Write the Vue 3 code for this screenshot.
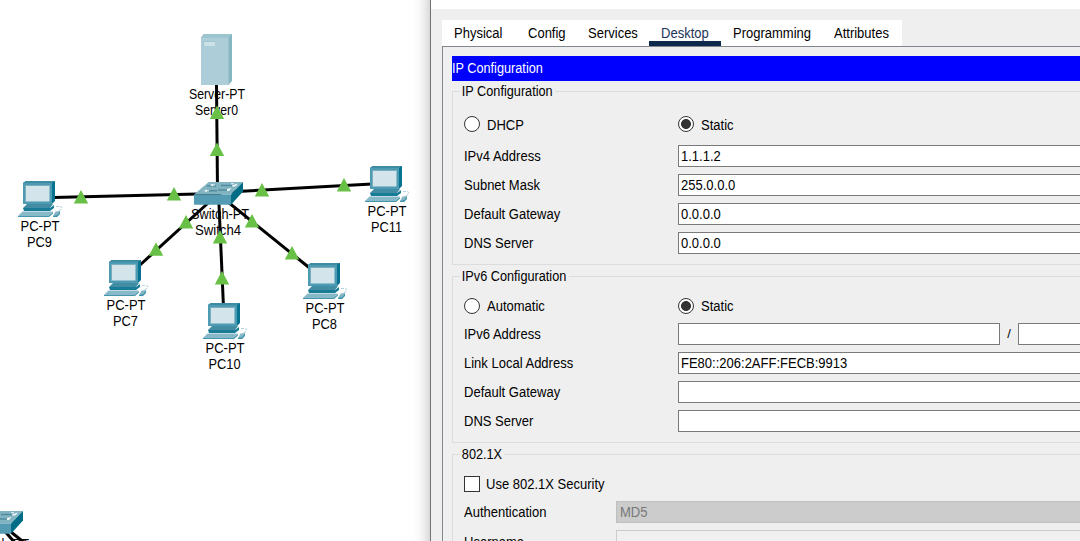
<script setup>
const tabs = [
  { name: 'Physical', width: 74 },
  { name: 'Config', width: 60 },
  { name: 'Services', width: 73 },
  { name: 'Desktop', width: 72, active: true },
  { name: 'Programming', width: 101 },
  { name: 'Attributes', width: 80 },
]
const ipv4 = [
  ['IPv4 Address', '1.1.1.2'],
  ['Subnet Mask', '255.0.0.0'],
  ['Default Gateway', '0.0.0.0'],
  ['DNS Server', '0.0.0.0'],
]
const ipv6 = [
  ['Link Local Address', 'FE80::206:2AFF:FECB:9913'],
  ['Default Gateway', ''],
  ['DNS Server', ''],
]
const pcs = [
  { name: 'PC9', x: 18, y: 181, w: 25 },
  { name: 'PC11', x: 365, y: 166, w: 31 },
  { name: 'PC7', x: 104, y: 260, w: 25 },
  { name: 'PC10', x: 203, y: 303, w: 32 },
  { name: 'PC8', x: 303, y: 263, w: 25 },
]
const links = [
  [216.5, 85, 217.5, 190],
  [53, 197.5, 218, 193.5],
  [372, 184, 218, 192.5],
  [140, 265, 218, 194],
  [309, 267.5, 218, 194],
  [223.3, 303, 218.5, 193],
]
const ports = [
  [217, 105.5], [217, 142.5], [262, 183], [174, 187], [81, 190], [344, 178],
  [186, 215], [252, 214], [220, 230], [156, 242.3], [222, 271], [292, 246],
]
const switches = [[194, 182], [-26, 511]]
</script>

<template>
  <main class="screen">
    <svg class="topology" width="430" height="541" viewBox="0 0 430 541">
      <defs>
        <g id="pc">
          <path d="M5 2L8 0H37V20L34 23Z" fill="#087391" />
          <path d="M5 2L8 0H37L34 2Z" fill="#3e8ca4" />
          <path d="M5 2H34V23H5Z" fill="#4d9ab3" />
          <path d="M7 4H31.5V20.5H7Z" fill="#d3e4ea" />
          <path d="M7 4H31.5V5H8V20.5H7Z" fill="#7aaebd" />
          <path d="M9 23H35L32 27H5Z" fill="#428da4" />
          <path d="M5 27H32L36 24V27L32 30H6Z" fill="#187c96" />
          <path d="M4.5 30.5H35L30 35H0Z" fill="#88b9c8" />
          <path d="M0 35H30L35 31V32.5L31 36H0Z" fill="#4595ac" />
          <path d="M37.5 30.5L42 30L39.5 35H35Z" fill="#87b7c5" />
          <path d="M35 35L39.5 34L42 30V33L39 36H35Z" fill="#3d93ab" />
          <path d="M38 25.5H42L44 26.5L42.5 29L40 30" fill="none" stroke="#b5d2dc" stroke-width="1" stroke-dasharray="3 1" />
        </g>
        <g id="switch">
          <path d="M0 12.5L14.7 0H49L37 12.5Z" fill="#82b3c1" />
          <path d="M0 12.5H37V22.7H0Z" fill="#529bb3" />
          <path d="M37 12.5L49 0V9.5L37 22.7Z" fill="#006c85" />
          <g fill="none" stroke="#508d9e" stroke-width="1.4">
            <path d="M13 4H22M27 3.5H38M12 8.7H23M24 8H35" />
          </g>
          <g fill="#eef6f8">
            <path d="M16 3L19 1.7V4.5ZM38 3.5L44 1.5L42 4L39 5ZM9.5 9L13 7.5V10ZM33 7L37.5 6L35 9H33Z" />
            <path d="M19 2.5h2v1h-2zM37 1.3h3v1h-3zM13 8.3h2v1h-2z" />
          </g>
        </g>
      </defs>

      <g class="caption">
        <text x="217" y="99" textLength="56" lengthAdjust="spacingAndGlyphs">Server-PT</text>
        <text x="216.5" y="115" textLength="43" lengthAdjust="spacingAndGlyphs">Server0</text>
        <text x="220" y="219" textLength="58" lengthAdjust="spacingAndGlyphs">Switch-PT</text>
        <text x="218" y="235" textLength="46" lengthAdjust="spacingAndGlyphs">Switch4</text>
        <text x="0" y="548.5" textLength="58" lengthAdjust="spacingAndGlyphs">Switch-PT</text>
      </g>

      <g stroke="#000" stroke-width="3">
        <line v-for="(l, i) in links" :key="i" :x1="l[0]" :y1="l[1]" :x2="l[2]" :y2="l[3]" />
        <line x1="2" y1="528" x2="16" y2="544" />
        <line x1="6" y1="528" x2="26" y2="544" />
      </g>

      <path d="M201 37.5L204 34H232V81L228.5 85H201Z" fill="#86b8c4" />
      <path d="M201 37.5L204 34H232L228.5 37.5Z" fill="#9cc4ce" />
      <path d="M201 37.5H228.5V85H201Z" fill="#adced9" />
      <path d="M203 41.5H215V46H203Z" fill="#cbe0e7" />
      <path d="M203 41H215V42H204V46H203Z" fill="#9fc5d0" />

      <use v-for="(s, i) in switches" :key="'s' + i" href="#switch" :x="s[0]" :y="s[1]" />
      <path v-for="(p, i) in ports" :key="'p' + i" :d="`M${p[0]} ${p[1]}l7.2 13.5h-14.4z`" fill="#69c047" />
      <g v-for="pc in pcs" :key="pc.name" class="caption">
        <use href="#pc" :x="pc.x" :y="pc.y" />
        <text :x="pc.x + 22" :y="pc.y + 50" textLength="39" lengthAdjust="spacingAndGlyphs">PC-PT</text>
        <text :x="pc.x + 21.5" :y="pc.y + 66" :textLength="pc.w" lengthAdjust="spacingAndGlyphs">{{ pc.name }}</text>
      </g>
    </svg>

    <section class="window">
      <div class="titlebar"></div>
      <nav class="tabs">
        <div v-for="t in tabs" :key="t.name" class="tab" :class="{ active: t.active }" :style="{ width: t.width + 'px' }"><span class="t">{{ t.name }}</span></div>
      </nav>
      <div class="page">
        <header class="heading"><span class="t narrow">IP Configuration</span></header>

        <fieldset class="group first">
          <legend class="t narrow">IP Configuration</legend>
          <div class="modes">
            <div class="mode"><i class="radio"></i><span class="t">DHCP</span></div>
            <div class="mode"><i class="radio on"></i><span class="t">Static</span></div>
          </div>
          <div v-for="r in ipv4" :key="r[0]" class="row">
            <label><span class="t">{{ r[0] }}</span></label>
            <div class="field"><span class="t">{{ r[1] }}</span></div>
          </div>
        </fieldset>

        <fieldset class="group second">
          <legend class="t narrow">IPv6 Configuration</legend>
          <div class="modes">
            <div class="mode"><i class="radio"></i><span class="t">Automatic</span></div>
            <div class="mode"><i class="radio on"></i><span class="t">Static</span></div>
          </div>
          <div class="row">
            <label><span class="t">IPv6 Address</span></label>
            <div class="field address"></div><span class="slash">/</span><div class="field"></div>
          </div>
          <div v-for="r in ipv6" :key="r[0]" class="row">
            <label><span class="t">{{ r[0] }}</span></label>
            <div class="field"><span class="t">{{ r[1] }}</span></div>
          </div>
        </fieldset>

        <fieldset class="group third">
          <legend class="t narrow">802.1X</legend>
          <div class="check"><i class="box"></i><span class="t">Use 802.1X Security</span></div>
          <div class="row auth"><label><span class="t">Authentication</span></label><div class="field disabled"><span class="t">MD5</span></div></div>
          <div class="row auth user"><label><span class="t">Username</span></label><div class="field blank"></div></div>
        </fieldset>
      </div>
    </section>
  </main>
</template>

<style>
body { margin: 0; overflow: hidden; }
</style>

<style scoped>
.screen {
  display: flex;
  width: 1080px;
  height: 541px;
  overflow: hidden;
  background: #fff;
  color: #000;
  font: 14px/16px "Liberation Sans", Arial, sans-serif;
}
.screen * { box-sizing: border-box; }
.t {
  display: inline-block;
  transform: scaleX(0.929);
  transform-origin: 0 50%;
  white-space: nowrap;
}
.t.narrow { transform: scaleX(0.907); }
.topology {
  flex: none;
  background: linear-gradient(to right, #fff 413px, #f8f8f8 420px, #ebebeb 425px, #dadada 430px);
}
.caption { text-anchor: middle; font-size: 14px; }
.window {
  flex: none;
  width: 650px;
  height: 541px;
  border-left: 1px solid #727272;
  background: #efefef;
}
.titlebar { height: 9px; background: #fff; }
.tabs {
  display: flex;
  width: 460px;
  height: 26px;
  margin: 11px 0 0 11px;
  background: #fff;
}
.tab { padding: 5px 0 0 12px; }
.tab.active { color: #1c3558; border-bottom: 5px solid #0c294c; }
.page {
  height: 495px;
  margin-left: 11px;
  padding: 9px 0 0 9px;
  border: solid #80868b;
  border-width: 1px 0 0 1px;
}
.heading { height: 25px; padding-top: 4px; background: #00f; color: #fff; }
.group {
  position: relative;
  min-width: 0;
  margin: 0;
  padding: 0 0 0 11px;
  border: 1px solid #dcdcdc;
  border-right: 0;
}
legend { position: absolute; top: -9px; left: 7px; padding: 0 3px 0 2px; background: #efefef; }
.first { height: 174px; margin-top: 10px; }
.second { height: 167px; margin-top: 11px; }
.third { height: 120px; margin-top: 11px; }
.modes { display: flex; height: 53px; padding-top: 24px; }
.second .modes { height: 46px; padding-top: 21px; }
.mode { display: flex; width: 214px; height: 16px; gap: 7px; line-height: 18px; }
.second .mode { line-height: 16px; }
.radio {
  width: 16px;
  height: 16px;
  border: 1px solid #333;
  border-radius: 50%;
  background: #fff;
}
.radio.on { background: radial-gradient(circle, #333 4.6px, #fff 5.3px); }
.row { display: flex; height: 22px; margin-bottom: 7px; line-height: 22px; }
.row label { flex: none; width: 214px; }
.field {
  flex: 1;
  height: 22px;
  padding-left: 2px;
  border: 1px solid #7a7a7a;
  border-right: 0;
  background: #fff;
  line-height: 20px;
}
.address { flex: 0 0 322px; border-right: 1px solid #7a7a7a; }
.slash { width: 18px; text-align: center; font-size: 13px; }
.check { display: flex; gap: 6px; height: 46px; padding-top: 21px; line-height: 16px; }
.box { width: 16px; height: 16px; border: 1px solid #333; background: #fff; }
.row.auth label { width: 152px; }
.user { line-height: 24px; }
.disabled { padding-left: 3px; border-color: #bfbfbf; background: #ccc; color: #787878; }
.blank { border-color: #ccc; background: #f0f0f0; }
</style>
